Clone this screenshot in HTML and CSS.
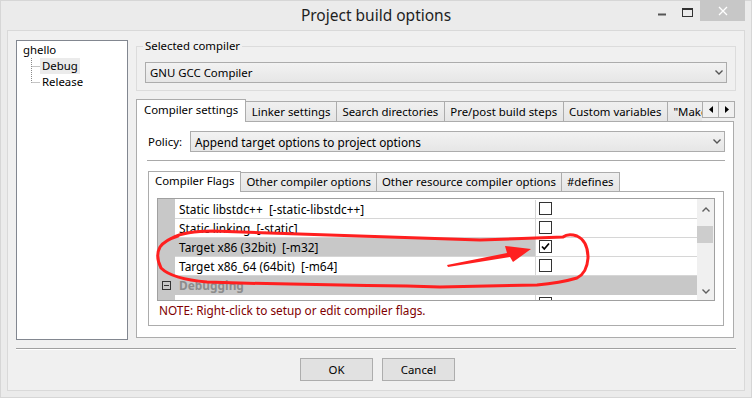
FILE: index.html
```html
<!DOCTYPE html>
<html>
<head>
<meta charset="utf-8">
<title>Project build options</title>
<link rel="stylesheet" href="styles.css">
</head>
<body>
<div class="window">
  <div class="titlebar">
    <div class="title">Project build options</div>
    <div class="controls">
      <svg class="minmax" width="42" height="21" viewBox="0 0 42 21"><path d="M0 14.5H8" stroke="#555" stroke-width="2"/><rect x="24.5" y="8.5" width="10" height="8" fill="none" stroke="#333" stroke-width="1"/><path d="M24 9.5H35" stroke="#333" stroke-width="1"/></svg>
      <span class="close"><svg width="10" height="10" viewBox="0 0 10 10"><path d="M1 1L9 9M9 1L1 9" stroke="#fff" stroke-width="1.3"/></svg></span>
    </div>
  </div>
  <div class="client">
    <div class="main">
      <div class="tree">
        <div class="node root">ghello</div>
        <div class="children">
          <svg class="treelines" width="9" height="32" viewBox="0 0 9 32"><path d="M0.5 0V24.5M0.5 8.5H9M0.5 24.5H9" stroke="#8a8a8a" stroke-width="1" stroke-dasharray="1 1" fill="none"/></svg>
          <div class="kids">
            <div class="node sel">Debug</div>
            <div class="node">Release</div>
          </div>
        </div>
      </div>
      <div class="right">
        <fieldset class="group">
          <legend>Selected compiler</legend>
          <div class="combo"><span>GNU GCC Compiler</span><svg class="chev" width="8" height="5" viewBox="0 0 8 5"><path d="M0.5 0.5L4 4L7.5 0.5" stroke="#555" stroke-width="1.4" fill="none"/></svg></div>
        </fieldset>
        <div class="notebook">
          <div class="tabbar">
            <div class="tabstrip">
              <div class="tab active">Compiler settings</div>
              <div class="tab">Linker settings</div>
              <div class="tab">Search directories</div>
              <div class="tab">Pre/post build steps</div>
              <div class="tab">Custom variables</div>
              <div class="tab">"Make" commands</div>
            </div>
            <div class="tabarrows">
              <span class="arrowbtn"><svg width="4" height="7" viewBox="0 0 4 7"><path d="M4 0L0 3.5L4 7Z" fill="#000"/></svg></span>
              <span class="arrowbtn"><svg width="4" height="7" viewBox="0 0 4 7"><path d="M0 0L4 3.5L0 7Z" fill="#000"/></svg></span>
            </div>
          </div>
          <div class="page">
            <div class="policy">
              <label class="plabel">Policy:</label>
              <div class="combo grow wide"><span>Append target options to project options</span><svg class="chev" width="8" height="5" viewBox="0 0 8 5"><path d="M0.5 0.5L4 4L7.5 0.5" stroke="#555" stroke-width="1.4" fill="none"/></svg></div>
            </div>
            <div class="hline"></div>
            <div class="subnb">
              <div class="subtabbar">
                <div class="tab sub active">Compiler Flags</div>
                <div class="tab sub">Other compiler options</div>
                <div class="tab sub">Other resource compiler options</div>
                <div class="tab sub">#defines</div>
              </div>
              <div class="subpage">
                <div class="grid">
                  <div class="rows">
                    <div class="row"><div class="gut"></div><div class="name">Static libstdc++  [-static-libstdc++]</div><div class="val"><span class="cb"></span></div></div>
                    <div class="row"><div class="gut"></div><div class="name">Static linking  [-static]</div><div class="val"><span class="cb"></span></div></div>
                    <div class="row hl"><div class="gut"></div><div class="name">Target x86 (32bit)  [-m32]</div><div class="val"><span class="cb"><svg width="11" height="11" viewBox="0 0 11 11"><path d="M2 5.5L4.3 8L9 2.5" stroke="#000" stroke-width="1.7" fill="none"/></svg></span></div></div>
                    <div class="row"><div class="gut"></div><div class="name">Target x86_64 (64bit)  [-m64]</div><div class="val"><span class="cb"></span></div></div>
                    <div class="row cat"><div class="gut"><span class="minus"></span></div><div class="catname">Debugging</div></div>
                    <div class="row"><div class="gut"></div><div class="name"></div><div class="val"><span class="cb"></span></div></div>
                  </div>
                  <div class="vscroll">
                    <svg class="sup" width="8" height="5" viewBox="0 0 8 5"><path d="M0.5 4.5L4 1L7.5 4.5" stroke="#606060" stroke-width="1.4" fill="none"/></svg>
                    <div class="thumb"></div>
                    <svg class="sdown" width="8" height="5" viewBox="0 0 8 5"><path d="M0.5 0.5L4 4L7.5 0.5" stroke="#606060" stroke-width="1.4" fill="none"/></svg>
                  </div>
                </div>
                <div class="note">NOTE: Right-click to setup or edit compiler flags.</div>
              </div>
            </div>
          </div>
        </div>
      </div>
    </div>
    <div class="sep"></div>
    <div class="buttons">
      <button class="btn">OK</button>
      <button class="btn">Cancel</button>
    </div>
  </div>
  <svg class="annot" width="752" height="398" viewBox="0 0 752 398">
    <path d="M172 238 Q185 231 213 231 L480 240 L563 237 Q568 233 577 236 Q588 241 588 258 Q587 273 577 278 Q560 283 537 285 L440 287 L407 286 Q300 285 207 282 Q172 279 161 268 Q155 256 160 247 Q165 240 178 236" stroke="#ff1f1f" stroke-width="3" fill="none" stroke-linejoin="round" stroke-linecap="round"/>
    <path d="M447 265 L507 253 L505 246 L531 249 L513 262 L510 257 L448 267 Z" fill="#ff1f1f"/>
  </svg>
</div>
</body>
</html>
```
FILE: styles.css
```css
* { box-sizing: border-box; }
html, body { margin: 0; padding: 0; }
body {
  width: 752px;
  height: 398px;
  overflow: hidden;
  background: #ebebeb;
  font-family: "Noto Sans", "Open Sans", sans-serif;
  font-size: 11.4px;
  color: #000;
}
.window {
  position: relative;
  width: 752px;
  height: 398px;
  background: #ebebeb;
  box-shadow: inset 0 0 0 1px #d6d6d6;
  display: flex;
  flex-direction: column;
}
.titlebar {
  height: 30px;
  flex: none;
  display: grid;
  grid-template-columns: 1fr auto 1fr;
  align-items: start;
}
.title {
  grid-column: 2;
  font-size: 15.5px;
  line-height: 30px;
  color: #1e1e1e;
}
.controls {
  grid-column: 3;
  justify-self: end;
  display: flex;
  align-items: flex-start;
  margin-right: 7px;
}
.minmax { flex: none; display: block; }
.close {
  width: 45px;
  height: 21px;
  flex: none;
  background: #c7c7c7;
  display: flex;
  align-items: center;
  justify-content: center;
}
.client {
  flex: 1;
  margin: 0 7px 7px;
  border: 1px solid #d9d9d9;
  background: #f0f0f0;
  display: flex;
  flex-direction: column;
}
.main {
  display: flex;
  gap: 8px;
  padding: 9px 8px 0;
}
.tree {
  width: 112px;
  height: 300px;
  flex: none;
  border: 1px solid #828790;
  background: #fff;
  padding: 1px 0 0 6px;
}
.node {
  height: 16px;
  line-height: 16px;
  padding: 0 2px;
  white-space: nowrap;
}
.node.root { padding: 0; }
.children {
  display: flex;
  margin-left: 8px;
}
.treelines { flex: none; }
.kids { display: flex; flex-direction: column; align-items: flex-start; }
.node.sel { background: #ebebeb; }

.right {
  width: 600px;
  flex: none;
  display: flex;
  flex-direction: column;
}
.group {
  margin: 0;
  min-width: 0;
  padding: 10px 8px 7px 8px;
  border: 1px solid #dcdcdc;
}
.group legend {
  padding: 0 2px;
  margin-left: -2px;
  line-height: 12px;
}
.combo {
  height: 21px;
  border: 1px solid #acacac;
  background: linear-gradient(#f2f2f2, #e6e6e6);
  display: flex;
  align-items: center;
  justify-content: space-between;
  padding: 0 3px 0 4px;
  white-space: nowrap;
}
.combo.wide { font-size: 11.8px; }
.chev { flex: none; }
.notebook { margin-top: 8px; display: flex; flex-direction: column; }
.tabbar {
  height: 23px;
  display: flex;
  align-items: flex-end;
  box-shadow: inset 0 -1px 0 #acacac;
  margin-right: 2px;
}
.tabstrip {
  flex: 1;
  min-width: 0;
  height: 23px;
  display: flex;
  align-items: flex-end;
  overflow: hidden;
}
.tab {
  flex: none;
  height: 20px;
  margin-bottom: 1px;
  margin-left: -1px;
  padding: 0 5.5px;
  line-height: 19px;
  border: 1px solid #acacac;
  border-bottom: none;
  background: linear-gradient(#f0f0f0, #e5e5e5);
  white-space: nowrap;
}
.tab:first-child { margin-left: 0; }
.tab.active {
  position: relative;
  z-index: 1;
  height: 23px;
  margin-bottom: 0;
  padding: 0 7px 3px;
  background: #fff;
}
.tabarrows {
  flex: none;
  display: flex;
  align-self: flex-start;
  margin-top: 2px;
  margin-right: -1px;
}
.arrowbtn {
  width: 17px;
  height: 17px;
  border: 1px solid #acacac;
  background: #f0f0f0;
  display: flex;
  align-items: center;
  justify-content: center;
}
.arrowbtn + .arrowbtn { margin-left: -1px; }
.page {
  height: 216px;
  margin-right: 2px;
  border: 1px solid #acacac;
  border-top: none;
  background: #fff;
  padding: 9px 8px 0 10px;
  display: flex;
  flex-direction: column;
}
.policy { display: flex; align-items: center; }
.plabel { width: 43px; flex: none; padding-left: 1px; }
.grow { flex: 1; min-width: 0; }
.hline { height: 1px; background: #a9a9a9; margin-top: 8px; }
.subnb { margin: 10px 1px 0; display: flex; flex-direction: column; }
.subtabbar {
  height: 21px;
  display: flex;
  align-items: flex-end;
  box-shadow: inset 0 -1px 0 #acacac;
}
.tab.sub { height: 19px; line-height: 18px; padding: 0 5px; }
.tab.sub.active { height: 21px; padding: 0 6px 2px; }
.subpage {
  height: 134px;
  border: 1px solid #acacac;
  border-top: none;
  background: #fff;
  padding: 6px 0 0 8px;
}
.grid {
  width: 558px;
  height: 103px;
  border: 1px solid #a0a0a0;
  display: flex;
}
.rows {
  width: 539px;
  height: 101px;
  overflow: hidden;
  padding-top: 1px;
  font-size: 11.9px;
  background: linear-gradient(to right, #c8c8c8 17px, #fff 17px);
}
.row { display: flex; height: 19px; }
.gut { width: 17px; flex: none; background: #c8c8c8; }
.name {
  width: 361px;
  flex: none;
  border-bottom: 1px solid #d6d6d6;
  border-right: 1px solid #d6d6d6;
  padding-left: 4px;
  line-height: 18px;
  white-space: pre;
}
.val {
  flex: 1;
  border-bottom: 1px solid #d6d6d6;
  padding: 2px 0 0 3px;
}
.cb {
  display: flex;
  align-items: center;
  justify-content: center;
  width: 13px;
  height: 13px;
  border: 1px solid #333;
  background: #fff;
}
.row.hl .name { background: #c8c8c8; }
.row.cat { background: #c8c8c8; }
.minus {
  display: block;
  position: relative;
  width: 9px;
  height: 9px;
  border: 1px solid #333;
  margin: 5px 0 0 4px;
}
.minus::after {
  content: "";
  position: absolute;
  left: 1px;
  right: 1px;
  top: 3px;
  height: 1px;
  background: #333;
}
.catname {
  padding-left: 4px;
  line-height: 19px;
  font-weight: bold;
  color: #8c8c8c;
}
.vscroll {
  width: 17px;
  flex: none;
  background: #f0f0f0;
  display: flex;
  flex-direction: column;
  align-items: center;
}
.sup { margin-top: 8px; }
.thumb { width: 16px; height: 17px; margin-top: 14px; background: #cdcdcd; align-self: flex-start; }
.sdown { margin-top: auto; margin-bottom: 6px; }
.note {
  margin-top: 1px;
  padding-left: 2px;
  line-height: 16px;
  font-size: 11.8px;
  color: #800000;
}
.sep {
  margin: 8px 8px 0;
  height: 2px;
  border-top: 1px solid #a0a0a0;
  border-bottom: 1px solid #fff;
}
.buttons {
  display: flex;
  justify-content: center;
  gap: 9px;
  margin-top: 8px;
  padding-left: 3px;
}
.btn {
  width: 73px;
  height: 23px;
  border: 1px solid #adadad;
  background: #e1e1e1;
  font-family: inherit;
  font-size: inherit;
  color: #000;
  padding: 0;
}
.annot {
  position: absolute;
  left: 0;
  top: 0;
  pointer-events: none;
}
```
